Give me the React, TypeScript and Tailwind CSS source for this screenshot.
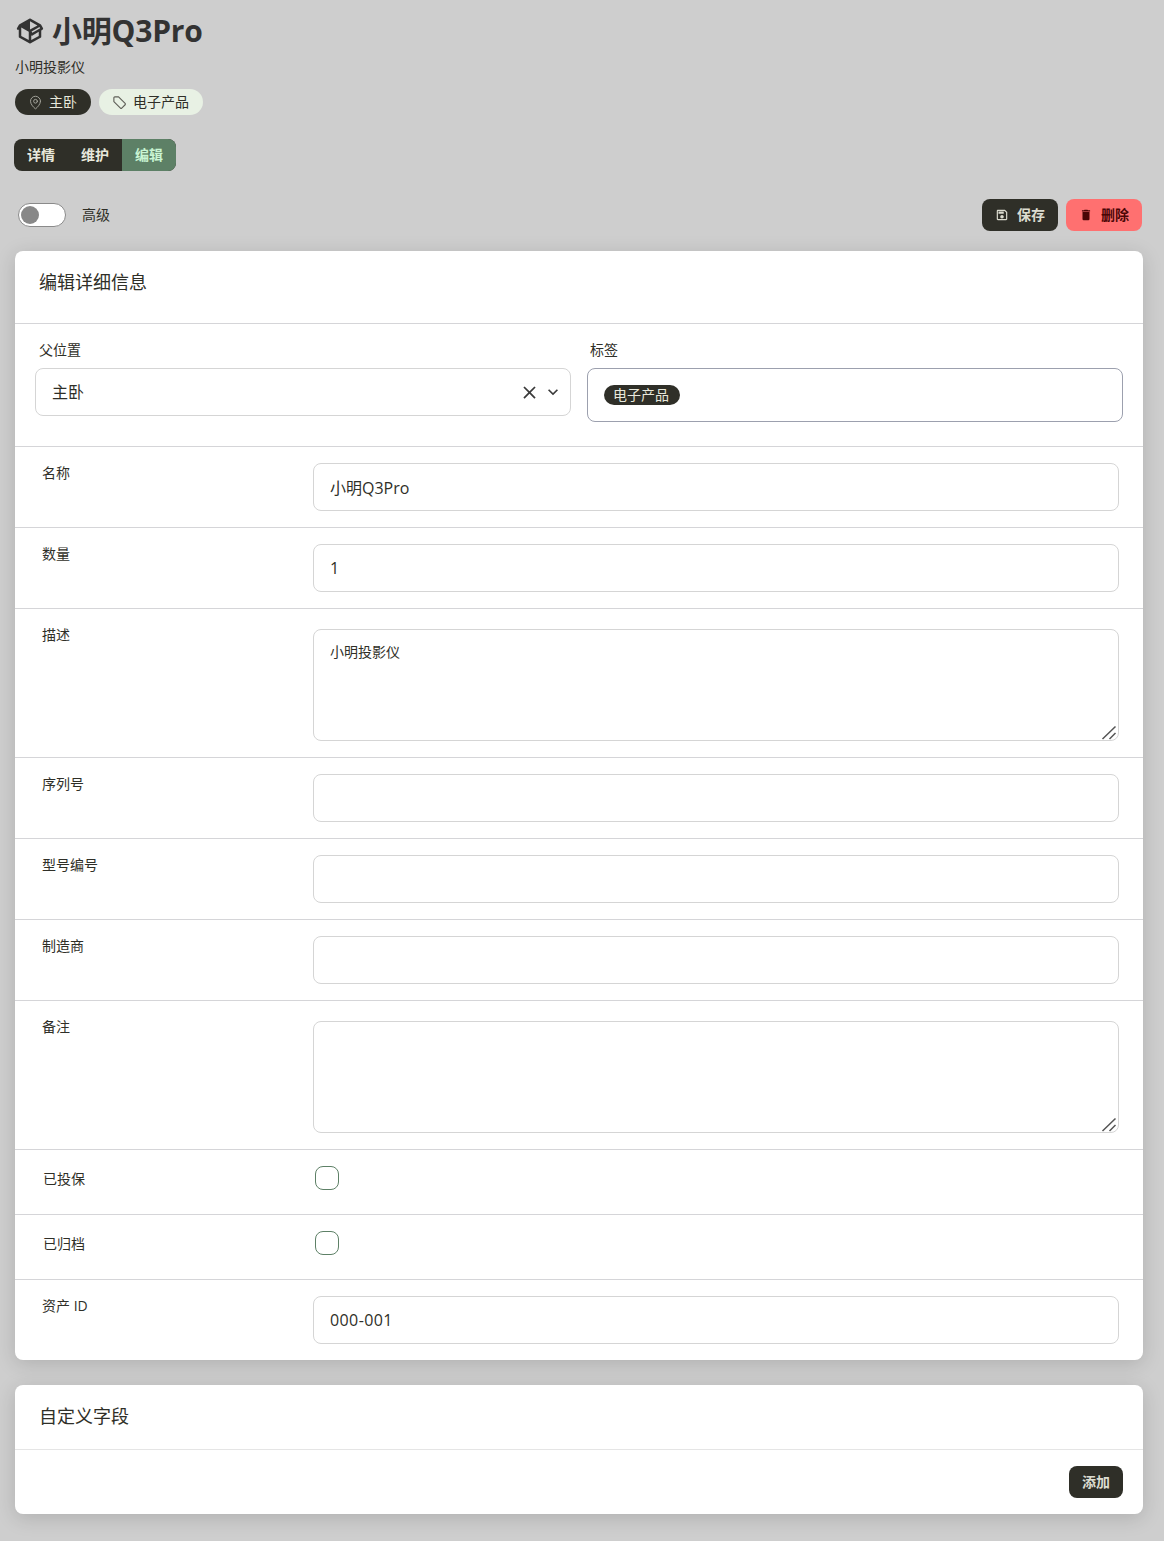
import React from "react";
import { MapPin } from "lucide-react";

const FONT = "font-['Open_Sans','Noto_Sans_CJK_SC',sans-serif]";

function Mdi({ d, className }: { d: string; className?: string }) {
  return (
    <svg viewBox="0 0 24 24" fill="currentColor" className={className}>
      <path d={d} />
    </svg>
  );
}

const PACKAGE =
  "M2,10.96C1.5,10.68 1.35,10.07 1.63,9.59L3.13,7C3.24,6.8 3.41,6.66 3.6,6.58L11.43,2.18C11.59,2.06 11.79,2 12,2C12.21,2 12.41,2.06 12.57,2.18L20.47,6.62C20.66,6.72 20.82,6.88 20.91,7.08L22.36,9.6C22.64,10.08 22.47,10.69 22,10.96L21,11.54V16.5C21,16.88 20.79,17.21 20.47,17.38L12.57,21.82C12.41,21.94 12.21,22 12,22C11.79,22 11.59,21.94 11.43,21.82L3.53,17.38C3.21,17.21 3,16.88 3,16.5V10.96C2.7,11.13 2.32,11.14 2,10.96M12,4.15V4.15L12,10.85V10.85L17.96,7.5L12,4.15M5,15.91L11,19.29V12.58L5,9.21V15.91M19,15.91V12.69L14,15.59C13.67,15.77 13.3,15.76 13,15.6V19.29L19,15.91M13.85,13.36L20.13,9.73L19.55,8.72L13.27,12.35L13.85,13.36Z";
const SAVE =
  "M17 3H5C3.89 3 3 3.9 3 5V19C3 20.1 3.89 21 5 21H19C20.1 21 21 20.1 21 19V7L17 3M19 19H5V5H16.17L19 7.83V19M12 12C10.34 12 9 13.34 9 15S10.34 18 12 18 15 16.66 15 15 13.66 12 12 12M6 6H15V10H6V6Z";
const TRASH = "M19,4H15.5L14.5,3H9.5L8.5,4H5V6H19M6,19A2,2 0 0,0 8,21H16A2,2 0 0,0 18,19V7H6V19Z";
const CLOSE =
  "M19,6.41L17.59,5L12,10.59L6.41,5L5,6.41L10.59,12L5,17.59L6.41,19L12,13.41L17.59,19L19,17.59L13.41,12L19,6.41Z";
const CHEVRON = "M7.41,8.58L12,13.17L16.59,8.58L18,10L12,16L6,10L7.41,8.58Z";

function InputRow({ label, value = "", spaced = false }: { label: string; value?: string; spaced?: boolean }) {
  return (
    <div className="grid grid-cols-[274px_1fr] border-t border-[#d5d5d8] px-6 py-4">
      <div className="pl-[3px] text-sm leading-5">{label}</div>
      <input
        readOnly
        value={value}
        className={`h-12 w-full rounded-lg border border-[#d5d5d5] bg-white px-4 text-base text-[#2f2f28] outline-none ${spaced ? "tracking-[0.4px]" : ""}`}
      />
    </div>
  );
}

function AreaRow({ label, value = "" }: { label: string; value?: string }) {
  return (
    <div className="grid grid-cols-[274px_1fr] border-t border-[#d5d5d8] px-6 pt-5 pb-4">
      <div className="-mt-1 pl-[3px] text-sm leading-5">{label}</div>
      <div className="relative">
        <textarea
          readOnly
          value={value}
          className="block h-28 w-full resize-none rounded-lg border border-[#d5d5d5] bg-white px-4 py-[12px] text-sm leading-5 text-[#2f2f28] outline-none"
        />
        <svg viewBox="0 0 16 16" className="absolute right-[2px] bottom-[1px] h-4 w-4 text-[#555555]" fill="none" stroke="currentColor" strokeWidth="1.5">
          <path d="M1.5 15 14.5 2.5M8.5 15 14.5 9" />
        </svg>
      </div>
    </div>
  );
}

function CheckRow({ label }: { label: string }) {
  return (
    <div className="grid h-[65px] grid-cols-[274px_1fr] border-t border-[#d5d5d8] px-6 pt-4">
      <div className="pl-1 pt-[3px] text-sm leading-5">{label}</div>
      <div className="ml-[2px] h-6 w-6 rounded-lg border border-[#5d8066] bg-white" />
    </div>
  );
}

export default function App() {
  return (
    <div className={`${FONT} min-h-[1541px] bg-[#cecece] pl-[15px] pr-[21px] text-[#2f2f28]`}>
      <div className="flex items-center gap-[7px] pt-[10px]">
        <Mdi d={PACKAGE} className="h-[30px] w-[30px] text-[#333333]" />
        <h1 className="text-[30px] leading-[42px] font-bold tracking-[-0.2px] text-[#333333]">小明Q3Pro</h1>
      </div>
      <p className="mt-[5px] text-sm leading-5">小明投影仪</p>
      <div className="mt-[12px] flex gap-2">
        <span className="flex h-[26px] items-center gap-[6px] rounded-full bg-[#2f2f28] px-[14px] pl-[13px] text-sm text-[#e8e8dc]">
          <MapPin size={15} strokeWidth={1.5} className="text-[#a8a89f]" />
          主卧
        </span>
        <span className="flex h-[26px] items-center gap-[6px] rounded-full bg-[#e8f1e4] pr-[14px] pl-[13px] text-sm text-[#2f2f28]">
          <svg viewBox="0 0 24 24" fill="none" stroke="currentColor" strokeWidth="1.8" strokeLinejoin="round" className="h-[15px] w-[15px] text-[#5f5f58]">
            <path d="M3 4.5A1.5 1.5 0 0 1 4.5 3H10.5L21 13.5A1.5 1.5 0 0 1 21 15.6L15.6 21A1.5 1.5 0 0 1 13.5 21L3 10.5Z" />
          </svg>
          电子产品
        </span>
      </div>

      <div className="-ml-[1px] mt-[24px] flex h-8 w-[162px] overflow-hidden rounded-lg bg-[#2f2f28] text-sm font-bold">
        <span className="flex w-[54px] items-center justify-center text-[#e8e8dc]">详情</span>
        <span className="flex w-[54px] items-center justify-center text-[#e8e8dc]">维护</span>
        <span className="flex w-[54px] items-center justify-center bg-[#5d8066] text-[#c9f5d3]">编辑</span>
      </div>

      <div className="mt-[28px] flex items-center justify-between">
        <div className="flex items-center pl-[3px]">
          <div className="flex h-6 w-12 items-center rounded-full border border-[#8a8a8a] bg-white pl-[2px]">
            <div className="h-[18px] w-[18px] rounded-full bg-[#888888]" />
          </div>
          <span className="ml-4 text-sm">高级</span>
        </div>
        <div className="flex gap-2 pr-[1px]">
          <button className="flex h-8 w-[76px] items-center justify-center gap-2 rounded-lg bg-[#2f2f28] text-sm font-bold text-[#dcdcd0]">
            <Mdi d={SAVE} className="h-[14px] w-[14px]" />
            保存
          </button>
          <button className="flex h-8 w-[76px] items-center justify-center gap-2 rounded-lg bg-[#ff7070] text-sm font-bold text-[#4a0606]">
            <Mdi d={TRASH} className="h-[14px] w-[14px]" />
            删除
          </button>
        </div>
      </div>

      <section className="mt-5 overflow-hidden rounded-lg bg-white shadow-[0_4px_20px_rgba(0,0,0,0.15)]">
        <h2 className="h-[72px] px-6 pt-[19px] text-lg leading-6">编辑详细信息</h2>
        <div className="flex h-[123px] items-start gap-4 border-t border-[#d5d5d8] px-5 pt-[16px]">
          <div className="flex-1">
            <div className="pl-1 text-sm leading-5">父位置</div>
            <div className="mt-[8px] flex h-12 items-center rounded-lg border border-[#d5d5d5] pr-[7px] pl-4 text-base">
              <span className="flex-1">主卧</span>
              <Mdi d={CLOSE} className="h-[21px] w-[21px] text-[#3a3a3a]" />
              <Mdi d={CHEVRON} className="ml-[3px] h-5 w-5 text-[#3a3a3a]" />
            </div>
          </div>
          <div className="flex-1">
            <div className="pl-[3px] text-sm leading-5">标签</div>
            <div className="mt-[8px] flex h-[54px] items-center rounded-lg border border-[#9ca0ae] pl-4">
              <span className="flex h-5 items-center rounded-full bg-[#2f2f28] pr-[11px] pl-[9px] text-sm text-[#e8e8dc]">
                电子产品
              </span>
            </div>
          </div>
        </div>
        <InputRow label="名称" value="小明Q3Pro" />
        <InputRow label="数量" value="1" />
        <AreaRow label="描述" value="小明投影仪" />
        <InputRow label="序列号" />
        <InputRow label="型号编号" />
        <InputRow label="制造商" />
        <AreaRow label="备注" />
        <CheckRow label="已投保" />
        <CheckRow label="已归档" />
        <InputRow label="资产 ID" value="000-001" spaced />
      </section>

      <section className="mt-[25px] overflow-hidden rounded-lg bg-white shadow-[0_4px_20px_rgba(0,0,0,0.15)]">
        <h2 className="h-16 px-6 pt-[19px] text-lg leading-6">自定义字段</h2>
        <div className="flex h-[65px] items-center justify-end border-t border-[#e5e5e5] pr-5">
          <button className="flex h-8 w-[54px] items-center justify-center rounded-lg bg-[#2f2f28] text-sm font-bold text-[#dcdcd0]">
            添加
          </button>
        </div>
      </section>
    </div>
  );
}
